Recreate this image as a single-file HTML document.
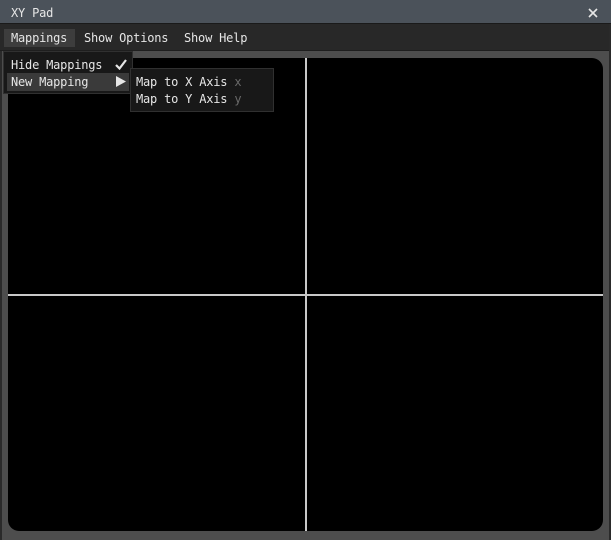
<!DOCTYPE html>
<html><head><style>
body{margin:0;width:611px;height:540px;background:#4d4d4d;position:relative;overflow:hidden;font-family:"DejaVu Sans Mono","Liberation Mono",monospace;font-size:12px;color:#e6e6e6}
div{position:absolute;box-sizing:border-box}
.t{white-space:pre;line-height:14px;letter-spacing:-0.2px}
</style></head><body>
<div style="left:0;top:0;width:611px;height:24px;background:#4b525a;border-bottom:1px solid #1a1a1a"></div>
<div class="t" style="left:11px;top:6px">XY Pad</div>
<svg style="position:absolute;left:588px;top:8px" width="10" height="10"><path d="M1 1L9 9M9 1L1 9" stroke="#e6e6e6" stroke-width="1.6"/></svg>
<div style="left:0;top:24px;width:611px;height:27px;background:#282828;border-bottom:1px solid #1e1e1e"></div>
<div style="left:4px;top:29px;width:71px;height:18px;background:#3d3d3d"></div>
<div class="t" style="left:11px;top:31px">Mappings</div>
<div class="t" style="left:84px;top:31px">Show Options</div>
<div class="t" style="left:184px;top:31px">Show Help</div>
<div style="left:0;top:51px;width:2px;height:489px;background:#2a2a2a"></div>
<div style="left:609px;top:24px;width:2px;height:516px;background:#2a2a2a"></div>
<div style="left:8px;top:58px;width:595px;height:473px;background:#000;border-radius:11px"></div>
<div style="left:305px;top:58px;width:2px;height:473px;background:#c8c8c8"></div>
<div style="left:8px;top:294px;width:595px;height:2px;background:#c8c8c8"></div>
<div style="left:3px;top:51px;width:130px;height:43px;background:#181818;border:1px solid #303030"></div>
<div style="left:7px;top:73px;width:122px;height:18px;background:#3a3a3a"></div>
<div class="t" style="left:11px;top:58px">Hide Mappings</div>
<svg style="position:absolute;left:115px;top:59px" width="12" height="11"><path d="M1 6L4.5 9.5L11 1" stroke="#e6e6e6" stroke-width="2.2" fill="none"/></svg>
<div class="t" style="left:11px;top:75px">New Mapping</div>
<svg style="position:absolute;left:116px;top:76px" width="10" height="11"><path d="M0 0L10 5.5L0 11Z" fill="#e6e6e6"/></svg>
<div style="left:130px;top:68px;width:144px;height:44px;background:#181818;border:1px solid #303030"></div>
<div class="t" style="left:136px;top:75px">Map to X Axis <span style="color:#6a6a6a">x</span></div>
<div class="t" style="left:136px;top:92px">Map to Y Axis <span style="color:#6a6a6a">y</span></div>
</body></html>
